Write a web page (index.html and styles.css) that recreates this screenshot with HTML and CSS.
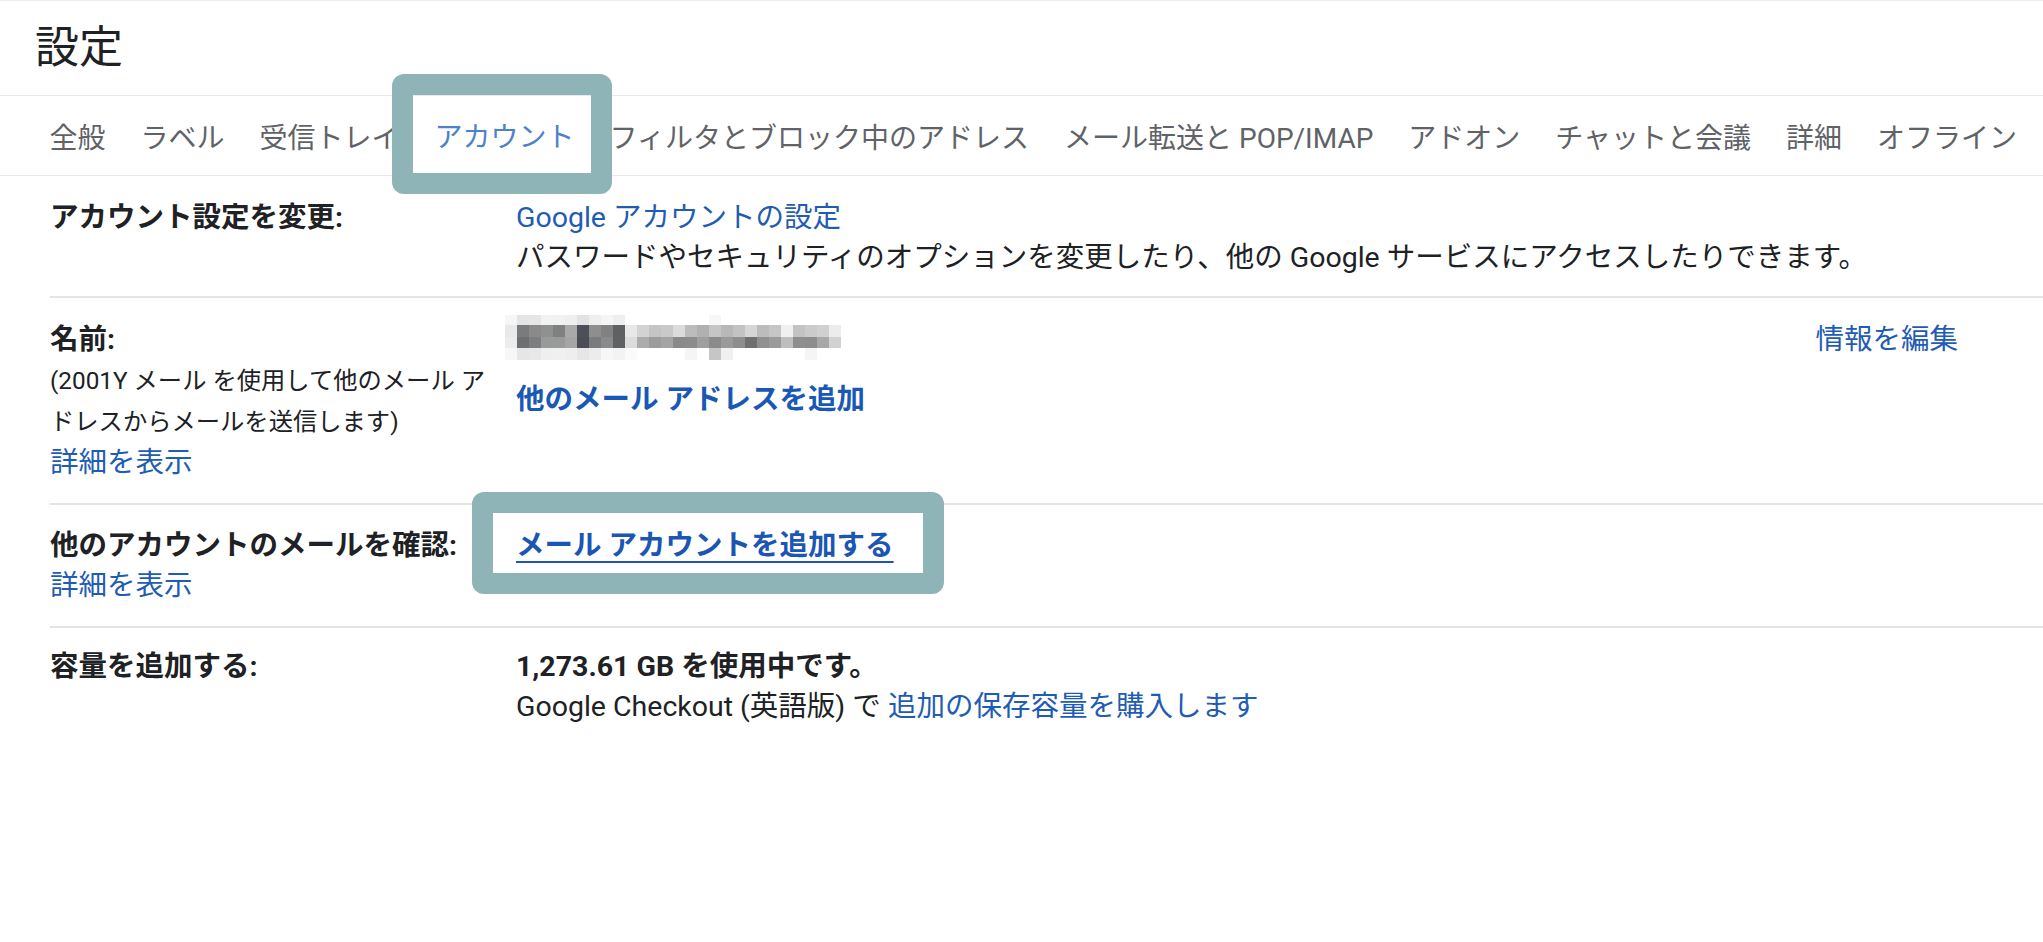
FILE: index.html
```html
<!DOCTYPE html>
<html lang="ja">
<head>
<meta charset="utf-8">
<title>設定</title>
<link rel="stylesheet" href="styles.css">
</head>
<body>
<div class="page">
  <header class="title-bar">
    <h1 class="title">設定</h1>
  </header>
  <nav class="tabs">
    <a class="tab">全般</a>
    <a class="tab">ラベル</a>
    <a class="tab">受信トレイ</a>
    <a class="tab active">アカウント</a>
    <a class="tab">フィルタとブロック中のアドレス</a>
    <a class="tab">メール転送と POP/IMAP</a>
    <a class="tab">アドオン</a>
    <a class="tab">チャットと会議</a>
    <a class="tab">詳細</a>
    <a class="tab">オフライン</a>
  </nav>
  <div class="settings">
    <div class="row row-account">
      <div class="label-cell"><div class="label">アカウント設定を変更:</div></div>
      <div class="value">
        <a class="link">Google アカウントの設定</a>
        <div>パスワードやセキュリティのオプションを変更したり、他の Google サービスにアクセスしたりできます。</div>
      </div>
    </div>
    <div class="row">
      <div class="label-cell tall">
        <div class="label">名前:</div>
        <div class="hint">(2001Y メール を使用して他のメール アドレスからメールを送信します)</div>
        <a class="link">詳細を表示</a>
      </div>
      <div class="value split">
        <div class="name-block">
          <div class="mosaic-line">
            <svg class="mosaic" width="336" height="45" viewBox="0 0 336 45" aria-hidden="true">
              <g>
                <rect x="0" y="0" width="12" height="10" fill="#f6f6f6"/>
                <rect x="12" y="0" width="12" height="10" fill="#e4e4e4"/>
                <rect x="24" y="0" width="12" height="10" fill="#e6e6e6"/>
                <rect x="36" y="0" width="12" height="10" fill="#f2f2f2"/>
                <rect x="48" y="0" width="12" height="10" fill="#f1f1f1"/>
                <rect x="60" y="0" width="12" height="10" fill="#efefef"/>
                <rect x="72" y="0" width="12" height="10" fill="#e3e3e3"/>
                <rect x="84" y="0" width="12" height="10" fill="#eeeeee"/>
                <rect x="96" y="0" width="12" height="10" fill="#f5f5f5"/>
                <rect x="108" y="0" width="12" height="10" fill="#eeeeee"/>
                <rect x="204" y="0" width="12" height="10" fill="#f7f7f7"/>
              </g>
              <g>
                <rect x="0" y="10" width="12" height="12" fill="#e9e9e9"/>
                <rect x="12" y="10" width="12" height="12" fill="#7a7b7c"/>
                <rect x="24" y="10" width="12" height="12" fill="#8a8a8b"/>
                <rect x="36" y="10" width="12" height="12" fill="#8f9090"/>
                <rect x="48" y="10" width="12" height="12" fill="#7f8081"/>
                <rect x="60" y="10" width="12" height="12" fill="#a9a9aa"/>
                <rect x="72" y="10" width="12" height="12" fill="#4d5058"/>
                <rect x="84" y="10" width="12" height="12" fill="#8e8e8f"/>
                <rect x="96" y="10" width="12" height="12" fill="#808182"/>
                <rect x="108" y="10" width="12" height="12" fill="#5e6061"/>
                <rect x="120" y="10" width="12" height="12" fill="#e8e8e8"/>
                <rect x="132" y="10" width="12" height="12" fill="#d3d3d3"/>
                <rect x="144" y="10" width="12" height="12" fill="#c4c4c4"/>
                <rect x="156" y="10" width="12" height="12" fill="#c9c9c9"/>
                <rect x="168" y="10" width="12" height="12" fill="#dcdcdc"/>
                <rect x="180" y="10" width="12" height="12" fill="#bcbcbc"/>
                <rect x="192" y="10" width="12" height="12" fill="#b0b0b0"/>
                <rect x="204" y="10" width="12" height="12" fill="#c5c5c5"/>
                <rect x="216" y="10" width="12" height="12" fill="#b8b8b8"/>
                <rect x="228" y="10" width="12" height="12" fill="#c3c3c3"/>
                <rect x="240" y="10" width="12" height="12" fill="#d6d6d6"/>
                <rect x="252" y="10" width="12" height="12" fill="#bcbcbc"/>
                <rect x="264" y="10" width="12" height="12" fill="#c6c6c6"/>
                <rect x="276" y="10" width="12" height="12" fill="#f0f0f0"/>
                <rect x="288" y="10" width="12" height="12" fill="#c3c3c3"/>
                <rect x="300" y="10" width="12" height="12" fill="#cbcbcb"/>
                <rect x="312" y="10" width="12" height="12" fill="#d0d0d0"/>
                <rect x="324" y="10" width="12" height="12" fill="#ececec"/>
              </g>
              <g>
                <rect x="0" y="22" width="12" height="11" fill="#ececec"/>
                <rect x="12" y="22" width="12" height="11" fill="#6e6f70"/>
                <rect x="24" y="22" width="12" height="11" fill="#7d7e7f"/>
                <rect x="36" y="22" width="12" height="11" fill="#999a9b"/>
                <rect x="48" y="22" width="12" height="11" fill="#9a9a9b"/>
                <rect x="60" y="22" width="12" height="11" fill="#a5a5a6"/>
                <rect x="72" y="22" width="12" height="11" fill="#4a4d55"/>
                <rect x="84" y="22" width="12" height="11" fill="#7a7b7c"/>
                <rect x="96" y="22" width="12" height="11" fill="#898a8b"/>
                <rect x="108" y="22" width="12" height="11" fill="#5f6162"/>
                <rect x="120" y="22" width="12" height="11" fill="#dcdcdc"/>
                <rect x="132" y="22" width="12" height="11" fill="#acacac"/>
                <rect x="144" y="22" width="12" height="11" fill="#9c9c9c"/>
                <rect x="156" y="22" width="12" height="11" fill="#a4a4a4"/>
                <rect x="168" y="22" width="12" height="11" fill="#8a8a8a"/>
                <rect x="180" y="22" width="12" height="11" fill="#8c8c8c"/>
                <rect x="192" y="22" width="12" height="11" fill="#9f9f9f"/>
                <rect x="204" y="22" width="12" height="11" fill="#8b8b8b"/>
                <rect x="216" y="22" width="12" height="11" fill="#9a9a9a"/>
                <rect x="228" y="22" width="12" height="11" fill="#8e8e8e"/>
                <rect x="240" y="22" width="12" height="11" fill="#6f7072"/>
                <rect x="252" y="22" width="12" height="11" fill="#909090"/>
                <rect x="264" y="22" width="12" height="11" fill="#9b9b9b"/>
                <rect x="276" y="22" width="12" height="11" fill="#bebebe"/>
                <rect x="288" y="22" width="12" height="11" fill="#8e8e8e"/>
                <rect x="300" y="22" width="12" height="11" fill="#8d8d8d"/>
                <rect x="312" y="22" width="12" height="11" fill="#a8a8a8"/>
                <rect x="324" y="22" width="12" height="11" fill="#d2d2d2"/>
              </g>
              <g>
                <rect x="0" y="33" width="12" height="12" fill="#f7f7f7"/>
                <rect x="12" y="33" width="12" height="12" fill="#e6e6e6"/>
                <rect x="24" y="33" width="12" height="12" fill="#e8e8e8"/>
                <rect x="36" y="33" width="12" height="12" fill="#efefef"/>
                <rect x="48" y="33" width="12" height="12" fill="#f0f0f0"/>
                <rect x="60" y="33" width="12" height="12" fill="#eeeeee"/>
                <rect x="72" y="33" width="12" height="12" fill="#e6e6e6"/>
                <rect x="84" y="33" width="12" height="12" fill="#ececec"/>
                <rect x="96" y="33" width="12" height="12" fill="#f7f7f7"/>
                <rect x="108" y="33" width="12" height="12" fill="#f3f3f3"/>
                <rect x="120" y="33" width="12" height="12" fill="#fbfbfb"/>
                <rect x="180" y="33" width="12" height="12" fill="#f5f5f5"/>
                <rect x="204" y="33" width="12" height="12" fill="#c6c6c6"/>
                <rect x="216" y="33" width="12" height="12" fill="#f0f0f0"/>
                <rect x="300" y="33" width="12" height="12" fill="#f5f5f5"/>
              </g>
            </svg>
          </div>
          <a class="link strong add-address">他のメール アドレスを追加</a>
        </div>
        <a class="link edit">情報を編集</a>
      </div>
    </div>
    <div class="row">
      <div class="label-cell">
        <div class="label">他のアカウントのメールを確認:</div>
        <a class="link">詳細を表示</a>
      </div>
      <div class="value">
        <span class="annot"><a class="link strong underline">メール アカウントを追加する</a></span>
      </div>
    </div>
    <div class="row row-storage">
      <div class="label-cell"><div class="label">容量を追加する:</div></div>
      <div class="value">
        <div class="strong">1,273.61 GB を使用中です。</div>
        <div>Google Checkout (英語版) で <a class="link">追加の保存容量を購入します</a></div>
      </div>
    </div>
  </div>
</div>
</body>
</html>
```

FILE: styles.css
```css
* {
  box-sizing: border-box;
}

html, body {
  margin: 0;
  padding: 0;
  background: #ffffff;
}

body {
  font-family: Roboto, "Noto Sans CJK JP", "Noto Sans", sans-serif;
  color: #202124;
}

.page {
  width: 2043px;
  min-height: 942px;
  border-top: 1px solid #eceef0;
  overflow: hidden;
}

.title-bar {
  height: 95px;
  border-bottom: 1px solid #e8eaed;
  display: flex;
  align-items: center;
  padding-left: 35px;
}

.title {
  margin: 0;
  font-size: 44px;
  font-weight: 400;
  line-height: 1;
  color: #202124;
}

.tabs {
  display: flex;
  height: 80px;
  border-bottom: 1px solid #e8eaed;
  padding-left: 32px;
  white-space: nowrap;
}

.tab {
  display: flex;
  align-items: center;
  padding: 0 17.5px;
  font-size: 28px;
  color: #5f6368;
  cursor: pointer;
}

.tab.active {
  position: relative;
  color: #4c82c9;
  border-bottom: 4px solid #5687cb;
  margin-bottom: -2px;
}

.tab.active::after {
  content: "";
  position: absolute;
  top: -22px;
  bottom: -21px;
  left: -25px;
  right: -20px;
  border: 21px solid #8fb4b7;
  border-radius: 12px;
  z-index: 2;
}

.settings {
  padding-left: 50px;
}

.row {
  display: grid;
  grid-template-columns: 466px 1fr;
  padding: 21px 0 20px;
  border-bottom: 2px solid #e4e4e4;
  font-size: 28.5px;
  line-height: 40px;
  color: #202124;
}

.row-account {
  padding: 22px 0 18px;
}

.row-storage {
  padding-top: 19px;
}

.row:last-child {
  border-bottom: none;
}

.label-cell {
  padding-right: 20px;
}

.label-cell.tall {
  line-height: 41px;
}

.label {
  font-weight: 700;
}

.hint {
  font-size: 24.3px;
}

.link {
  color: #1f5cb3;
  text-decoration: none;
  cursor: pointer;
}

.strong {
  font-weight: 700;
}

.value {
  display: flex;
  flex-direction: column;
  align-items: flex-start;
}

.value.split {
  flex-direction: row;
  justify-content: space-between;
  padding-right: 85px;
  line-height: 41px;
}

.name-block {
  display: flex;
  flex-direction: column;
  align-items: flex-start;
}

.mosaic-line {
  height: 41px;
}

.mosaic {
  display: block;
  margin: -4px 0 0 -11px;
}

.add-address {
  margin-top: 20px;
  line-height: 40px;
  color: #1a58b6;
}

.annot {
  position: relative;
  display: inline-block;
}

.annot::after {
  content: "";
  position: absolute;
  top: -34px;
  bottom: -28px;
  left: -44px;
  right: -50px;
  border: 21px solid #8fb4b7;
  border-radius: 12px;
}

.underline {
  color: #1a56b2;
  text-decoration: underline;
  text-decoration-thickness: 2px;
  text-underline-offset: 6px;
}
```
